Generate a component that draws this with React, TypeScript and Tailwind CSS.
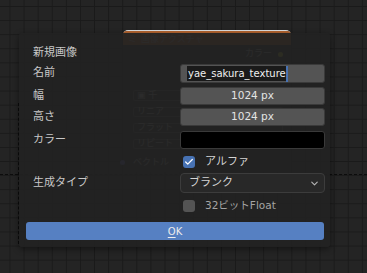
import React from "react";
import { Check, ChevronDown } from "lucide-react";

// Faint image-texture node that sits behind the popup
const TextureNode = () => (
  <div className="absolute left-[123px] top-[30px] w-[168px] h-[142px] rounded-[5px] border-t border-[#dcdcdc] bg-[#2e2e2e] text-[9px] text-[#b0b0b0]">
    <div className="h-[14px] rounded-t-[4px] bg-[#b5652f] flex items-center pl-[5px] pt-[3px]">
      <span className="mr-[4px]">ミ</span>画像テクスチャ
    </div>
    <div className="flex items-center justify-end pr-[8px] mt-[3px] h-[12px]">
      カラー
      <span className="ml-[6px] w-[5px] h-[5px] rounded-full bg-[#c7c729]" />
    </div>
    <div className="flex flex-col gap-[6px] mt-[30px] pl-[10px] pr-[8px]">
      <div className="h-[11px] rounded-[2px] border border-[#555] flex items-center pl-[3px]">▣ 千</div>
      <div className="h-[10px] rounded-[2px] border border-[#555] flex items-center pl-[3px]">リニア</div>
      <div className="h-[10px] rounded-[2px] border border-[#555] flex items-center pl-[3px]">フラット</div>
      <div className="h-[10px] rounded-[2px] border border-[#555] flex items-center pl-[3px]">リピート</div>
    </div>
    <div className="flex items-center mt-[7px] -ml-[3px]">
      <span className="w-[5px] h-[5px] rounded-full bg-[#6363c7] mr-[8px]" />
      ベクトル
    </div>
  </div>
);

const Label = ({ children }: { children: React.ReactNode }) => (
  <div className="w-[154px] pl-[7px] text-[11px] text-[#c8c8c8]">{children}</div>
);

const NumField = ({ value }: { value: string }) => (
  <div className="w-[145px] h-[18px] rounded-[3px] border border-[#3a3a3a] bg-[#545454] flex items-center justify-center text-[10.5px] text-[#e4e4e4]">
    {value}
  </div>
);

export default function App() {
  return (
    <div className="relative w-[367px] h-[273px] overflow-hidden bg-[#242424] bg-[linear-gradient(to_right,#1a1a1a_1px,transparent_1px),linear-gradient(to_bottom,#1a1a1a_1px,transparent_1px)] bg-[size:14.1px_14.1px] bg-[position:9.5px_6px] font-['DejaVu_Sans','Noto_Sans_CJK_JP',sans-serif]">
      <div className="absolute left-0 right-0 top-[174px] border-t border-dashed border-[#0c0c0c]" />
      <div className="absolute left-[18px] top-[103px] h-[141px] border-l border-dashed border-[#0c0c0c]" />

      <TextureNode />

      {/* 新規画像 popup */}
      <div className="absolute left-[19px] top-[33px] w-[311px] bg-[#222222]/[0.94] rounded-[3px] shadow-[0_2px_6px_rgba(0,0,0,0.45)] pt-[8px] pb-[7px] pl-[7px] pr-[5px]">
        <div className="h-[20px] pt-[4px] flex items-center">
          <Label>新規画像</Label>
        </div>

        <div className="flex items-center mt-[3px] h-[19px]">
          <Label>名前</Label>
          <div className="w-[145px] h-[19px] rounded-[3px] border border-[#3a3a3a] bg-[#545454] flex items-center pl-[6px]">
            <span className="h-[15px] bg-[#1a1a1a] flex items-center pl-[1px] text-[10px] text-[#f0f0f0] leading-none">
              yae_sakura_texture
            </span>
            <span className="w-[2px] h-[16px] bg-[#4772b3]" />
          </div>
        </div>

        <div className="flex items-center mt-[4px]">
          <Label>幅</Label>
          <NumField value="1024 px" />
        </div>

        <div className="flex items-center mt-[3px]">
          <Label>高さ</Label>
          <NumField value="1024 px" />
        </div>

        <div className="flex items-center mt-[5px]">
          <Label>カラー</Label>
          <div className="w-[145px] h-[18px] rounded-[3px] border border-[#3a3a3a] bg-black" />
        </div>

        <div className="flex items-center mt-[6px] h-[14px]">
          <div className="w-[154px]" />
          <div className="flex items-center pl-[3px]">
            <span className="w-[12px] h-[12px] rounded-[3px] bg-[#4772b3] flex items-center justify-center">
              <Check size={10} strokeWidth={3} color="#ffffff" />
            </span>
            <span className="ml-[10px] text-[11px] text-[#d4d4d4]">アルファ</span>
          </div>
        </div>

        <div className="flex items-center mt-[4px]">
          <Label>生成タイプ</Label>
          <div className="w-[145px] h-[20px] rounded-[4px] border border-[#3c3c3c] bg-[#282828] flex items-center justify-between pl-[8px] pr-[4px] text-[11px] text-[#d4d4d4]">
            ブランク
            <ChevronDown size={11} strokeWidth={2.5} color="#b4b4b4" />
          </div>
        </div>

        <div className="flex items-center mt-[6px] h-[14px]">
          <div className="w-[154px]" />
          <div className="flex items-center pl-[3px]">
            <span className="w-[12px] h-[12px] rounded-[3px] bg-[#545454]" />
            <span className="ml-[10px] text-[10.5px] text-[#a4a4a4]">32ビットFloat</span>
          </div>
        </div>

        <div className="mt-[9px] w-[298px] h-[18px] rounded-[3px] bg-[#5680c2] flex items-center justify-center text-[10px] text-[#ececec]">
          <span className="underline underline-offset-2">O</span>K
        </div>
      </div>
    </div>
  );
}
